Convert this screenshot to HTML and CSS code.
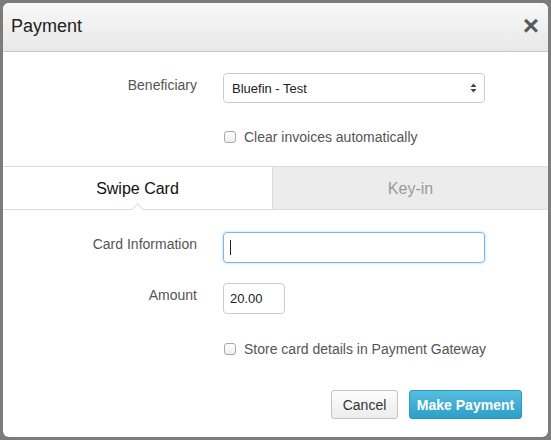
FILE: index.html
```html
<!DOCTYPE html>
<html>
<head>
<meta charset="utf-8">
<link rel="stylesheet" href="styles.css">
</head>
<body>
<div class="modal">
  <div class="modal-header">
    <h1 class="title">Payment</h1>
    <span class="close">&times;</span>
  </div>
  <div class="section top">
    <div class="row">
      <label class="label">Beneficiary</label>
      <div class="select">
        <span>Bluefin - Test</span>
        <svg class="arrows" width="7" height="10" viewBox="0 0 7 10"><path d="M3.5 0.5 L6.5 4 L0.5 4 Z M3.5 9.5 L6.5 6 L0.5 6 Z" fill="#444"/></svg>
      </div>
    </div>
    <div class="row check-row first-check">
      <span class="label"></span>
      <div class="check"><span class="box"></span><span>Clear invoices automatically</span></div>
    </div>
  </div>
  <div class="tabs">
    <div class="tab active">Swipe Card</div>
    <div class="tab inactive">Key-in</div>
  </div>
  <div class="section bottom">
    <div class="row">
      <label class="label">Card Information</label>
      <div class="input focus"><span class="cursor"></span></div>
    </div>
    <div class="row amount-row">
      <label class="label">Amount</label>
      <div class="input small">20.00</div>
    </div>
    <div class="row check-row second-check">
      <span class="label"></span>
      <div class="check"><span class="box"></span><span>Store card details in Payment Gateway</span></div>
    </div>
  </div>
  <div class="footer">
    <button class="btn cancel">Cancel</button>
    <button class="btn primary">Make Payment</button>
  </div>
</div>
</body>
</html>
```
FILE: styles.css
```css
* { box-sizing: border-box; }
html, body { margin: 0; padding: 0; }
body {
  background: #7c7c7c;
  width: 551px;
  height: 440px;
  padding: 3px;
  font-family: "Liberation Sans", Arial, sans-serif;
  color: #333;
}
.modal {
  width: 545px;
  height: 434px;
  background: #fff;
  border-radius: 6px;
  overflow: hidden;
  display: flex;
  flex-direction: column;
}
.modal-header {
  height: 49px;
  background: linear-gradient(#f8f8f8, #e8e8e8);
  border-bottom: 1px solid #c9c9c9;
  display: flex;
  align-items: center;
  justify-content: space-between;
  padding: 0 9px 0 8px;
}
.title {
  margin: 0;
  font-size: 18px;
  font-weight: normal;
  color: #222;
  position: relative;
  top: -1px;
}
.close {
  font-size: 28px;
  font-weight: bold;
  color: #5a5a5a;
  line-height: 1;
  position: relative;
  top: -1px;
}
.section.top { padding-top: 21px; height: 114px; }
.row {
  display: grid;
  grid-template-columns: 194px 262px;
  column-gap: 26px;
  align-items: start;
}
.label {
  text-align: right;
  font-size: 14px;
  color: #555;
  padding-top: 4px;
}
.select {
  height: 30px;
  border: 1px solid #ccc;
  border-radius: 4px;
  display: flex;
  align-items: center;
  justify-content: space-between;
  padding: 0 7px 0 8px;
  font-size: 13px;
  color: #222;
  background: #fff;
}
.arrows { display: block; }
.check-row { align-items: center; }
.first-check { margin-top: 26px; }
.check {
  display: flex;
  align-items: center;
  font-size: 14px;
  color: #555;
  white-space: nowrap;
}
.box {
  width: 12px;
  height: 12px;
  border: 1px solid #a8a8a8;
  border-radius: 3px;
  background: linear-gradient(#fff, #ededed);
  margin: 0 8px 0 1px;
  flex: none;
}
.tabs {
  display: flex;
  height: 44px;
  border-top: 1px solid #dcdcdc;
  border-bottom: 1px solid #dcdcdc;
}
.tab {
  display: flex;
  align-items: center;
  justify-content: center;
  font-size: 16px;
  position: relative;
}
.tab.active {
  width: 270px;
  background: #fff;
  color: #111;
  border-right: 1px solid #dcdcdc;
  padding-top: 1px;
}
.tab.active::after {
  content: "";
  position: absolute;
  bottom: -5px;
  left: 130px;
  width: 8px;
  height: 8px;
  background: #fff;
  border-left: 1px solid #dcdcdc;
  border-top: 1px solid #dcdcdc;
  transform: rotate(45deg);
}
.tab.inactive {
  flex: 1;
  background: #ececec;
  color: #999;
  padding-top: 1px;
}
.section.bottom { padding-top: 22px; height: 180px; }
.input {
  height: 31px;
  border: 1px solid #ccc;
  border-radius: 4px;
  font-size: 13px;
  color: #222;
  display: flex;
  align-items: center;
  padding: 0 6px;
}
.input.focus {
  border-color: #7db4e6;
  box-shadow: 0 0 3px rgba(102, 175, 233, 0.5);
}
.cursor {
  width: 1px;
  height: 15px;
  background: #222;
}
.amount-row { margin-top: 20px; }
.input.small { width: 62px; }
.second-check { margin-top: 27px; }
.footer {
  display: flex;
  justify-content: flex-end;
  gap: 11px;
  padding: 0 26px 0 0;
}
.btn {
  height: 29px;
  font-family: "Liberation Sans", Arial, sans-serif;
  font-size: 14px;
  border-radius: 3px;
  padding: 0;
}
.cancel {
  width: 67px;
  background: linear-gradient(#fdfdfd, #ececec);
  border: 1px solid #c4c4c4;
  color: #333;
}
.primary {
  width: 113px;
  background: linear-gradient(#55bddf, #2f9fc6);
  border: 1px solid #2b98bd;
  color: #fff;
  font-weight: bold;
}
```
